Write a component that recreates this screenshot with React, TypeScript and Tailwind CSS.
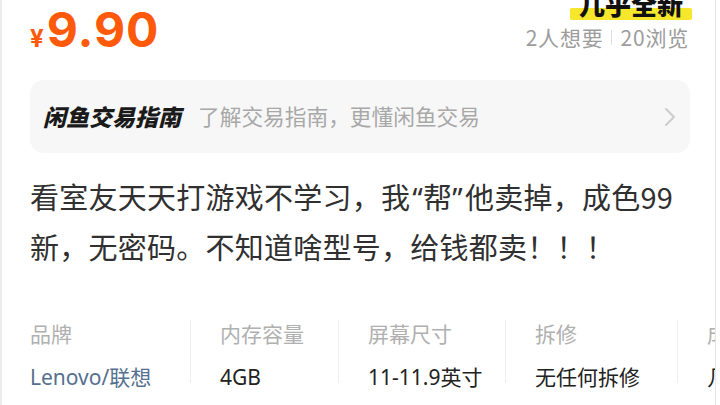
import React from "react";

const CJK = { fontFamily: '"Noto Sans CJK SC", "Noto Sans", sans-serif' };
const VAL = { fontFamily: '"Noto Sans", "Noto Sans CJK SC", sans-serif' };
const Q = { fontFamily: '"Noto Sans", sans-serif' };

function Col({ label, value, valueClass, w, first }: { label: string; value: string; valueClass?: string; w: string; first?: boolean }) {
  return (
    <div className={`flex flex-col shrink-0 ${w} ${first ? "" : "pl-[29px]"}`}>
      <div className="text-[21px] leading-[30px] text-[#b0b0b0] whitespace-nowrap">{label}</div>
      <div className={`mt-[14px] text-[21px] leading-[30px] whitespace-nowrap ${valueClass ?? "text-[#222]"}`} style={VAL}>
        {value}
      </div>
    </div>
  );
}

function Divider() {
  return <div className="shrink-0 w-px h-[63px] mt-[2px] bg-[#eeeeee]" />;
}

export default function App() {
  return (
    <div className="w-[720px] h-[405px] bg-white flex overflow-hidden" style={CJK}>
      <div className="w-[2px] shrink-0 bg-[#ececec]" />
      <div className="flex-1 min-w-0 overflow-hidden border-r border-[#e6e6e6] pl-[28px]">
        <div className="w-[660px]">
          {/* top row */}
          <div className="flex justify-between h-[80px]">
            <div className="flex items-baseline pt-[6px] text-[#ff5a0b]" style={{ fontFamily: "Inter, sans-serif" }}>
              <span className="text-[24px] font-bold leading-none mr-[3px]">¥</span>
              <span className="text-[48px] font-bold leading-none tracking-[1px]">9.90</span>
            </div>
            <div className="flex flex-col items-end">
              <div className="relative mt-[-9px] px-[9px] mr-[-2px]">
                <span className="absolute left-0 right-0 bottom-0 h-[12px] bg-[#f6e62c] rounded-[2px]" />
                <span className="relative text-[26px] leading-[26px] font-black text-[#111]">几乎全新</span>
              </div>
              <div className="mt-[7px] flex items-center text-[21px] leading-[21px] tracking-[0.8px] text-[#9c9c9c]">
                <span>2人想要</span>
                <span className="mx-[8px] w-px h-[15px] bg-[#dddddd]" />
                <span className="mr-[1px]">20浏览</span>
              </div>
            </div>
          </div>

          {/* guide */}
          <div className="h-[73px] rounded-[14px] bg-[#f7f7f7] flex items-center pl-[13px] pr-[14px]">
            <span className="text-[23px] font-black italic text-[#1a1a1a] whitespace-nowrap">闲鱼交易指南</span>
            <span className="ml-[17px] text-[21.7px] text-[#a8a8a8] whitespace-nowrap">了解交易指南，更懂闲鱼交易</span>
            <span className="flex-1" />
            <svg width="12" height="20" viewBox="0 0 12 20" fill="none">
              <path d="M2 2 L10 10 L2 18" stroke="#cccccc" strokeWidth="2" strokeLinecap="round" strokeLinejoin="round" />
            </svg>
          </div>

          {/* description */}
          <div className="mt-[19px] text-[29px] leading-[48px] tracking-[0.25px] text-[#303030] whitespace-nowrap">
            看室友天天打游戏不学习，我<span className="ml-[2px]" style={Q}>“</span>帮<span className="mr-[2px]" style={Q}>”</span>他卖掉，成色99
            <br />
            新，无密码。不知道啥型号，给钱都卖！！！
          </div>

          {/* specs */}
          <div className="mt-[48px] flex items-start">
            <Col first w="w-[160px]" label="品牌" value="Lenovo/联想" valueClass="text-[#56708f]" />
            <Divider />
            <Col w="w-[147px]" label="内存容量" value="4GB" />
            <Divider />
            <Col w="w-[166px]" label="屏幕尺寸" value="11-11.9英寸" />
            <Divider />
            <Col w="w-[171px]" label="拆修" value="无任何拆修" />
            <Divider />
            <Col w="w-[171px]" label="成色" value="几乎全新" />
          </div>
        </div>
      </div>
      <div className="w-[4px] shrink-0" />
    </div>
  );
}
